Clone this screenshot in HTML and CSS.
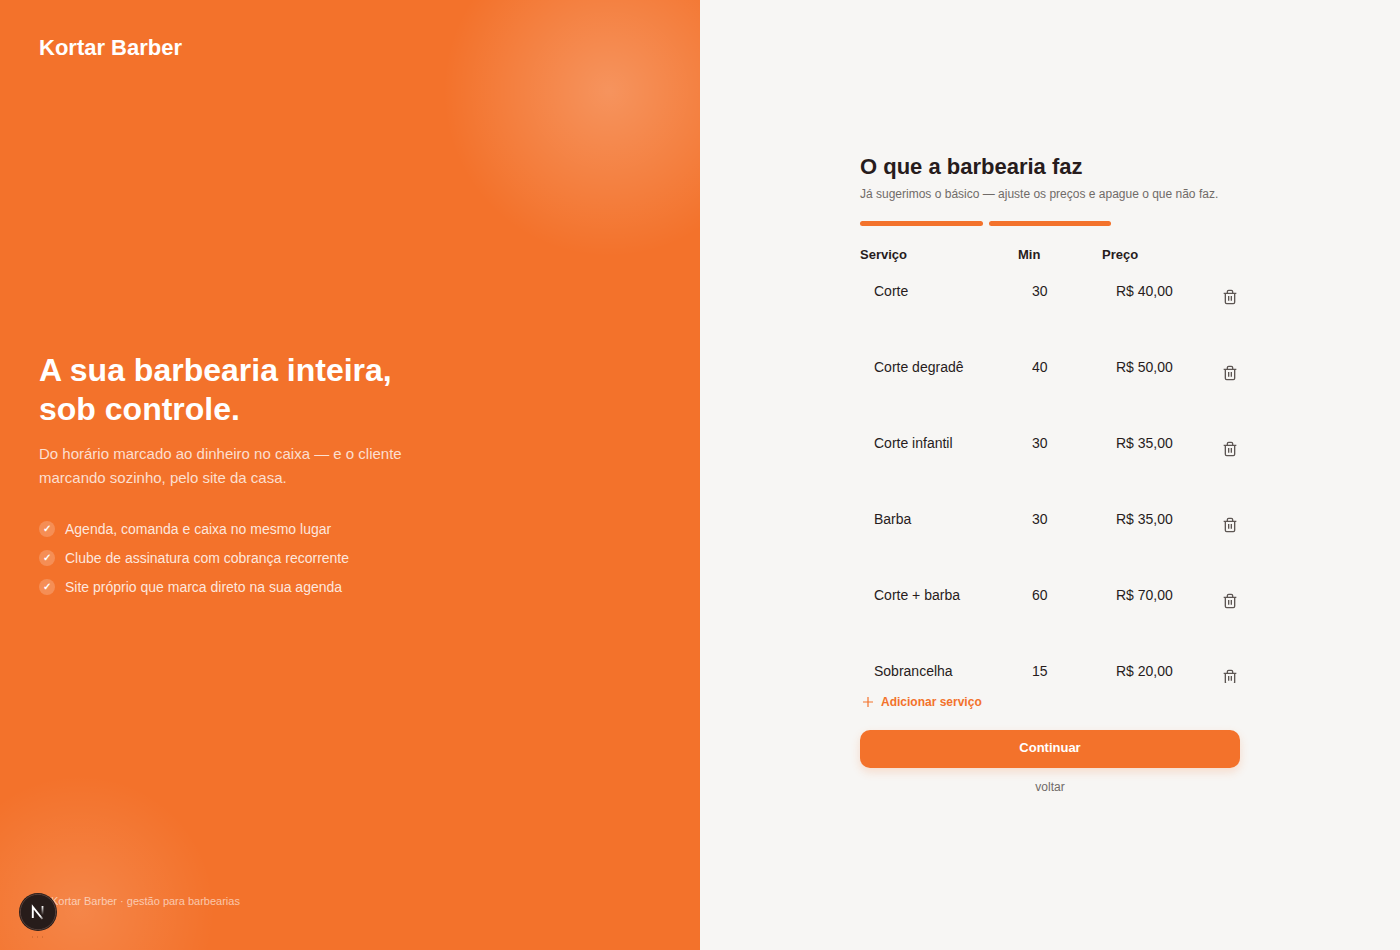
FILE: index.html
```html
<!DOCTYPE html>
<html lang="pt-BR">
<head>
<meta charset="utf-8">
<meta name="viewport" content="width=device-width, initial-scale=1">
<title>Kortar Barber</title>
<link rel="stylesheet" href="styles.css">
</head>
<body>
<svg class="sprite" aria-hidden="true">
  <symbol id="trash" viewBox="0 0 24 24"><path d="M2.500 6.500h19M8 6V4a2 2 0 0 1 2-2h4a2 2 0 0 1 2 2v2M19 6.500V20a2 2 0 0 1-2 2H7a2 2 0 0 1-2-2V6.500M10 10.500v7M14 10.500v7"/></symbol>
</svg>
<div class="page">
  <aside class="hero">
    <div class="glow glow-top"></div>
    <div class="glow glow-bottom"></div>
    <div class="brand">Kortar Barber</div>
    <div class="pitch">
      <h2>A sua barbearia inteira,<br>sob controle.</h2>
      <p>Do horário marcado ao dinheiro no caixa — e o cliente marcando sozinho, pelo site da casa.</p>
      <ul>
        <li><span class="tick" aria-hidden="true">✓</span>Agenda, comanda e caixa no mesmo lugar</li>
        <li><span class="tick" aria-hidden="true">✓</span>Clube de assinatura com cobrança recorrente</li>
        <li><span class="tick" aria-hidden="true">✓</span>Site próprio que marca direto na sua agenda</li>
      </ul>
    </div>
    <div class="foot">Kortar Barber · gestão para barbearias</div>
  </aside>
  <main class="panel">
    <form class="setup">
      <h1>O que a barbearia faz</h1>
      <p class="sub">Já sugerimos o básico — ajuste os preços e apague o que não faz.</p>
      <div class="steps"><span></span><span></span></div>
      <div class="row head"><span id="c1">Serviço</span><span id="c2">Min</span><span id="c3">Preço</span></div>
      <div class="list">
        <div class="row"><input aria-labelledby="c1" value="Corte"><input aria-labelledby="c2" value="30"><input aria-labelledby="c3" value="R$ 40,00"><button type="button" class="del" aria-label="Apagar Corte"><svg><use href="#trash"/></svg></button></div>
        <div class="row"><input aria-labelledby="c1" value="Corte degradê"><input aria-labelledby="c2" value="40"><input aria-labelledby="c3" value="R$ 50,00"><button type="button" class="del" aria-label="Apagar Corte degradê"><svg><use href="#trash"/></svg></button></div>
        <div class="row"><input aria-labelledby="c1" value="Corte infantil"><input aria-labelledby="c2" value="30"><input aria-labelledby="c3" value="R$ 35,00"><button type="button" class="del" aria-label="Apagar Corte infantil"><svg><use href="#trash"/></svg></button></div>
        <div class="row"><input aria-labelledby="c1" value="Barba"><input aria-labelledby="c2" value="30"><input aria-labelledby="c3" value="R$ 35,00"><button type="button" class="del" aria-label="Apagar Barba"><svg><use href="#trash"/></svg></button></div>
        <div class="row"><input aria-labelledby="c1" value="Corte + barba"><input aria-labelledby="c2" value="60"><input aria-labelledby="c3" value="R$ 70,00"><button type="button" class="del" aria-label="Apagar Corte + barba"><svg><use href="#trash"/></svg></button></div>
        <div class="row"><input aria-labelledby="c1" value="Sobrancelha"><input aria-labelledby="c2" value="15"><input aria-labelledby="c3" value="R$ 20,00"><button type="button" class="del" aria-label="Apagar Sobrancelha"><svg><use href="#trash"/></svg></button></div>
      </div>
      <button type="button" class="add"><svg viewBox="0 0 16 16"><path d="M8 3v10M3 8h10"/></svg>Adicionar serviço</button>
      <button type="button" class="primary">Continuar</button>
      <button type="button" class="back">voltar</button>
    </form>
  </main>
</div>
<button type="button" class="dev" aria-label="Dev Tools">
  <svg viewBox="0 0 38 46">
    <defs>
      <linearGradient id="n1" gradientUnits="userSpaceOnUse" x1="18" y1="18" x2="24" y2="26"><stop offset=".6" stop-color="#fff"/><stop offset="1" stop-color="#fff" stop-opacity=".3"/></linearGradient>
      <linearGradient id="n2" gradientUnits="userSpaceOnUse" x1="23" y1="13" x2="23" y2="22"><stop offset="0" stop-color="#fff"/><stop offset="1" stop-color="#fff" stop-opacity="0"/></linearGradient>
    </defs>
    <circle cx="19" cy="19" r="19" fill="#271c1a"/>
    <circle cx="19" cy="19" r="17.7" fill="none" stroke="#56403a"/>
    <path d="M13.800 25V14L23.500 26" fill="none" stroke="url(#n1)" stroke-width="1.900"/>
    <path d="M23.500 13V22" stroke="url(#n2)" stroke-width="1.800"/>
    <path d="M13 44h1M18 44h1M23 44h1" stroke="#a5531f" stroke-opacity=".7"/>
  </svg>
</button>
</body>
</html>
```
FILE: styles.css
```css
* { box-sizing: border-box; }
body {
  margin: 0;
  background: #f7f6f4;
  color: #271c1c;
  font-family: "Liberation Sans", Arial, sans-serif;
  font-size: 14px;
}
h1, h2, p, ul { margin: 0; padding: 0; }
button, input { font: inherit; color: inherit; background: none; border: 0; margin: 0; padding: 0; }
button { cursor: pointer; }
.sprite { display: none; }
.page { display: grid; grid-template-columns: 1fr 1fr; min-height: 100vh; }

.hero {
  position: relative;
  overflow: hidden;
  display: flex;
  flex-direction: column;
  justify-content: space-between;
  padding: 36px 39px 39px;
  background: #f3722b;
  color: #fff;
}
.hero > * { position: relative; }
.hero > .glow { position: absolute; border-radius: 50%; }
.glow-top {
  width: 460px; height: 460px; top: -139px; right: -139px;
  background: radial-gradient(closest-side, rgba(255,255,255,.24), transparent 72%);
}
.glow-bottom {
  width: 360px; height: 360px; bottom: -140px; left: -100px;
  background: radial-gradient(closest-side, rgba(255,255,255,.14), transparent 75%);
}
.brand { font-size: 22px; line-height: 24px; font-weight: 700; }
.pitch { padding-bottom: 4px; }
.pitch h2 { font-size: 32px; line-height: 39px; font-weight: 700; }
.pitch p { max-width: 380px; margin-top: 13px; font-size: 15px; line-height: 24px; color: rgba(255,255,255,.78); }
.pitch ul { display: grid; gap: 10px; margin-top: 30px; list-style: none; }
.pitch li { display: flex; align-items: center; gap: 10px; font-size: 14px; line-height: 19px; color: rgba(255,255,255,.85); }
.tick {
  width: 16px; height: 16px; border-radius: 50%;
  background: rgba(255,255,255,.2);
  color: #fff; font-size: 10px; line-height: 16px; font-weight: 700; text-align: center;
}
.foot { font-size: 11px; line-height: 20px; padding-left: 12px; color: rgba(255,255,255,.6); }

.panel { display: flex; align-items: center; justify-content: center; padding: 24px; }
.setup { display: flex; flex-direction: column; width: 100%; max-width: 380px; }
.setup h1 { font-size: 22px; line-height: 28px; }
.sub { margin-top: 3px; font-size: 12px; line-height: 20px; color: #706b68; }
.steps { display: grid; grid-template-columns: repeat(3, 1fr); gap: 6px; margin-top: 17px; }
.steps span { height: 5px; border-radius: 3px; background: #f3722b; }
.row { display: grid; grid-template-columns: 1fr 76px 110px 20px; column-gap: 8px; align-items: start; }
.head { margin: 19px 0 7px; font-size: 13px; line-height: 20px; font-weight: 700; }
.list { display: grid; gap: 8px; max-height: 411px; overflow-y: auto; scrollbar-width: none; }
.list .row { height: 68px; }
.row input { width: 100%; min-width: 0; height: 38px; padding: 0 14px; font-size: 14px; }
.del { display: grid; place-items: center; height: 50px; color: #5d5653; }
.del svg { width: 16px; height: 16px; fill: none; stroke: currentColor; stroke-width: 2; }
.add { display: flex; align-items: center; align-self: flex-start; gap: 5px; margin-top: 9px; font-size: 12px; line-height: 20px; font-weight: 700; color: #f3722b; }
.add svg { width: 16px; height: 16px; fill: none; stroke: currentColor; stroke-width: 1.200; }
.primary {
  height: 38px; margin-top: 18px; padding-bottom: 3px; border-radius: 10px;
  background: #f3722b; color: #fff; font-size: 13px; font-weight: 700;
  box-shadow: 0 4px 10px rgba(243,114,43,.2);
}
.back { align-self: center; margin-top: 9px; font-size: 12px; line-height: 20px; color: #706b68; }

.dev { position: fixed; left: 19px; bottom: 11px; width: 38px; height: 46px; }
.dev svg { display: block; width: 38px; height: 46px; }
```
